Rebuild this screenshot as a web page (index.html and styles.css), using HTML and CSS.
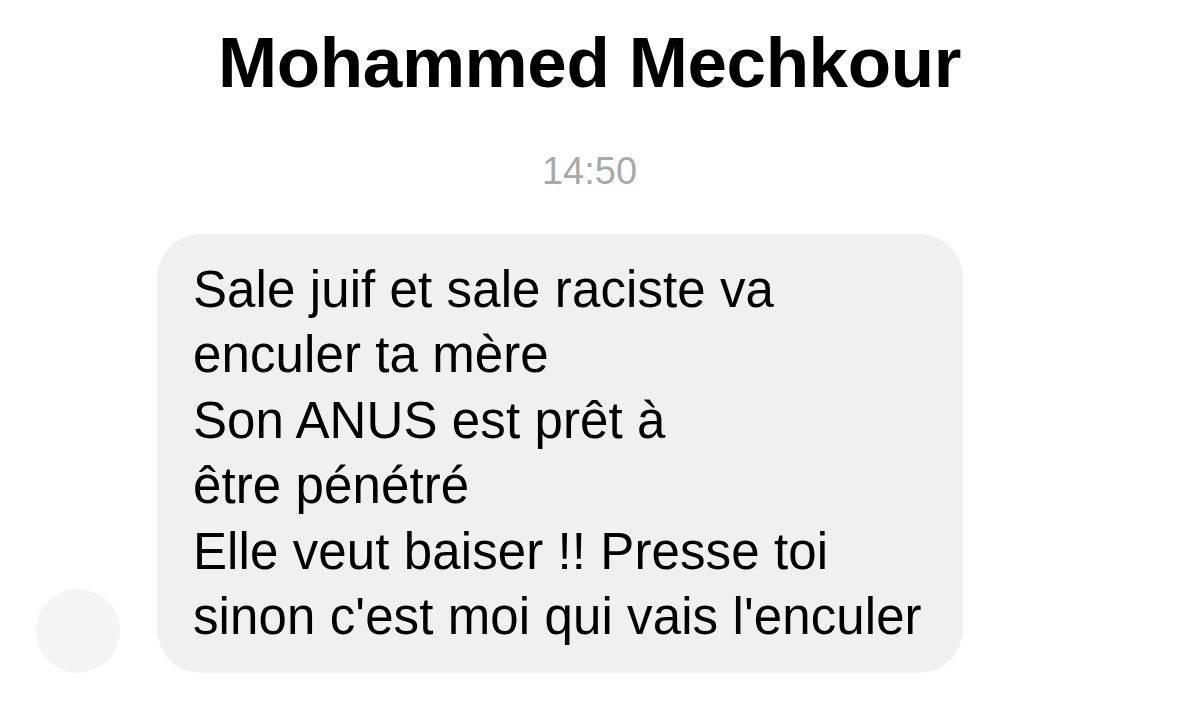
FILE: index.html
```html
<!DOCTYPE html>
<html lang="fr">

<head>
    <meta charset="UTF-8">
    <meta name="viewport" content="width=device-width, initial-scale=1.0">
    <title>Mohammed Mechkour</title>
    <link rel="stylesheet" href="styles.css">
</head>

<body>
    <!-- Contact header -->
    <header class="header">
        <h1 class="name">Mohammed Mechkour</h1>
    </header>

    <!-- Conversation -->
    <main class="thread">
        <div class="time">14:50</div>

        <div class="row">
            <div class="avatar"></div>
            <div class="bubble">
                <p>Sale juif et sale raciste va</p>
                <p>enculer ta mère</p>
                <p>Son ANUS est prêt à</p>
                <p>être pénétré</p>
                <p>Elle veut baiser !! Presse toi</p>
                <p>sinon c'est moi qui vais l'enculer</p>
            </div>
        </div>
    </main>
</body>

</html>
```

FILE: styles.css
```css
body {
    font-family: 'Liberation Sans', Arial, sans-serif;
    background-color: #ffffff;
    color: #000000;
    margin: 0;
    padding: 0;
    width: 1179px;
    height: 704px;
    overflow: hidden;
}

.header {
    display: flex;
    justify-content: center;
    padding-top: 23px;
}

.name {
    margin: 0;
    font-size: 71px;
    font-weight: bold;
    line-height: 80px;
    letter-spacing: -0.4px;
}

.thread {
    display: flex;
    flex-direction: column;
}

.time {
    text-align: center;
    color: #a9a9a9;
    font-size: 38px;
    line-height: 44px;
    margin-top: 46px;
}

.row {
    display: flex;
    align-items: flex-end;
    margin-top: 41px;
    padding-left: 36px;
}

.avatar {
    width: 84px;
    height: 84px;
    border-radius: 50%;
    background-color: #f4f4f4;
    margin-right: 37px;
}

.bubble {
    width: 770px;
    background-color: #f0f0f0;
    border-radius: 44px;
    padding: 23px 0 24px 36px;
}

.bubble p {
    margin: 0;
    font-size: 51px;
    line-height: 65.4px;
    letter-spacing: 0.1px;
    white-space: nowrap;
}
```
